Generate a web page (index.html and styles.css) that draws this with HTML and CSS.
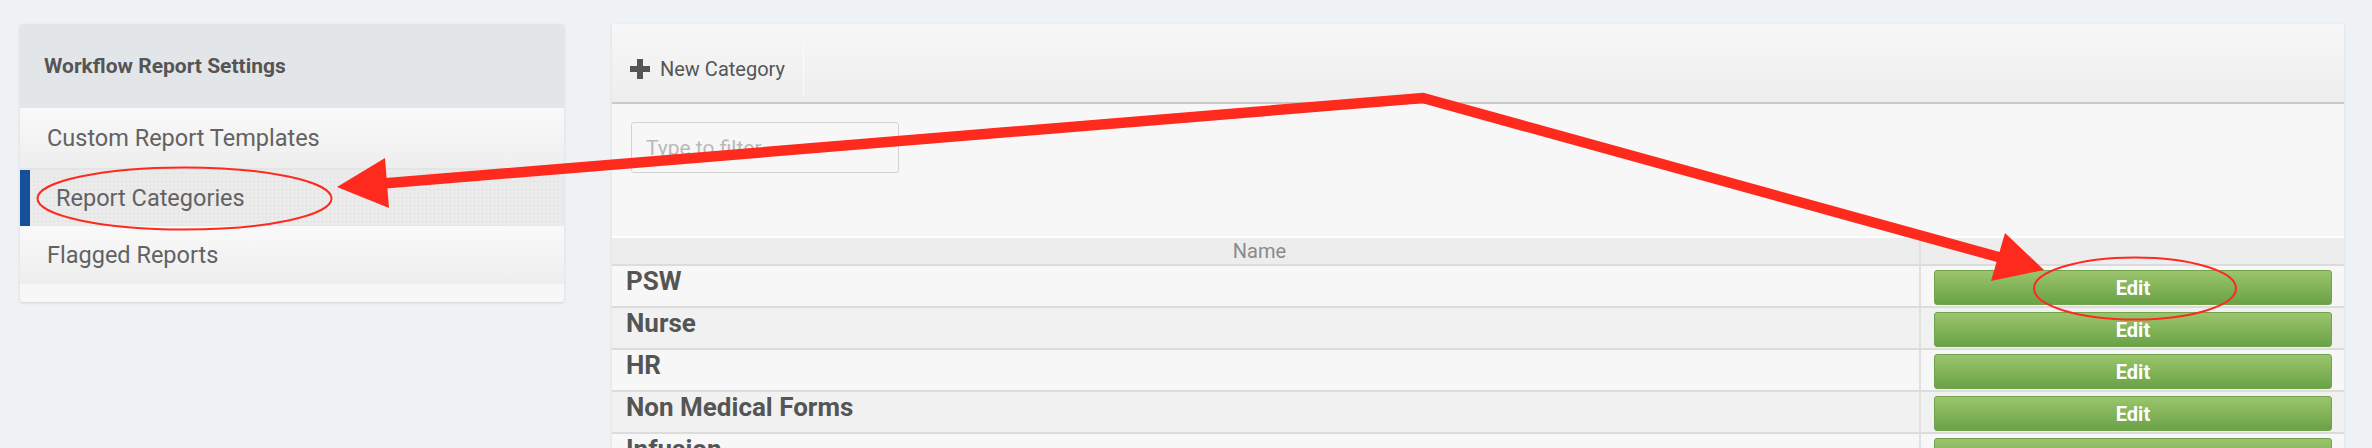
FILE: index.html
```html
<!DOCTYPE html>
<html lang="en">
<head>
<meta charset="utf-8">
<title>Report Categories</title>
<link rel="stylesheet" href="styles.css">
</head>
<body>
<div class="page">
  <aside class="settings-card">
    <div class="card-header">Workflow Report Settings</div>
    <nav class="menu">
      <a class="menu-item first">Custom Report Templates</a>
      <a class="menu-item active">Report Categories</a>
      <a class="menu-item">Flagged Reports</a>
    </nav>
  </aside>
  <main class="panel">
    <div class="toolbar">
      <button class="tool-btn" type="button">
        <svg class="plus" width="20" height="20" viewBox="0 0 20 20"><rect x="7" y="0" width="6" height="20" fill="#555"/><rect x="0" y="7" width="20" height="6" fill="#555"/></svg>
        <span>New Category</span>
      </button>
    </div>
    <div class="filter-area">
      <input class="filter" type="text" placeholder="Type to filter">
    </div>
    <div class="table">
      <div class="thead">
        <div class="th name-col">Name</div>
        <div class="th"></div>
      </div>
      <div class="row"><div class="cell name">PSW</div><div class="cell action"><button class="edit" type="button">Edit</button></div></div>
      <div class="row alt"><div class="cell name">Nurse</div><div class="cell action"><button class="edit" type="button">Edit</button></div></div>
      <div class="row"><div class="cell name">HR</div><div class="cell action"><button class="edit" type="button">Edit</button></div></div>
      <div class="row alt"><div class="cell name">Non Medical Forms</div><div class="cell action"><button class="edit" type="button">Edit</button></div></div>
      <div class="row"><div class="cell name">Infusion</div><div class="cell action"><button class="edit" type="button">Edit</button></div></div>
    </div>
  </main>
</div>
<svg class="annotations" width="2372" height="448" viewBox="0 0 2372 448">
  <path d="M383,183.5 L1423,98 L2002,258" fill="none" stroke="#fe2a1e" stroke-width="10.5" stroke-linejoin="miter"/>
  <polygon points="337,187 385,158 389,208" fill="#fe2a1e"/>
  <polygon points="2044,270 2005,233 1991,281" fill="#fe2a1e"/>
  <ellipse cx="184.5" cy="198.5" rx="147" ry="31" fill="none" stroke="#fe2a1e" stroke-width="2"/>
  <ellipse cx="2135" cy="288.5" rx="101" ry="31" fill="none" stroke="#fe2a1e" stroke-width="2"/>
</svg>
</body>
</html>
```
FILE: styles.css
```css
html, body {
  margin: 0;
  height: 100%;
}
body {
  background: #eef2f5;
  font-family: Roboto, "Liberation Sans", sans-serif;
  overflow: hidden;
  position: relative;
}
.page {
  display: flex;
  align-items: flex-start;
  gap: 48px;
  padding: 24px 28px 0 20px;
}

/* left settings card */
.settings-card {
  width: 544px;
  flex: none;
  background: #f7f7f7;
  box-shadow: 0 1px 3px rgba(0, 0, 0, 0.13);
  border-radius: 2px;
  padding-bottom: 18px;
}
.card-header {
  height: 84px;
  display: flex;
  align-items: center;
  padding-left: 24px;
  background: #e3e6e9;
  border-radius: 2px 2px 0 0;
  font-weight: 700;
  font-size: 21px;
  color: #555;
}
.menu {
  display: flex;
  flex-direction: column;
}
.menu-item {
  display: flex;
  align-items: center;
  height: 58px;
  padding-left: 27px;
  font-size: 23.5px;
  color: #626262;
  background: linear-gradient(#f9f9f9, #eeeeee);
  text-decoration: none;
}
.menu-item.first {
  height: 60px;
  border-bottom: 2px solid #e4e4e4;
}
.menu-item.active {
  height: 56px;
  border-left: 10px solid #16509a;
  padding-left: 26px;
  background-color: #ececec;
  background-image:
    repeating-linear-gradient(0deg, rgba(0, 0, 0, 0.018) 0 1px, transparent 1px 4px),
    repeating-linear-gradient(90deg, rgba(0, 0, 0, 0.018) 0 1px, transparent 1px 4px);
}

/* right panel */
.panel {
  flex: 1;
  background: #f7f7f7;
  box-shadow: 0 1px 3px rgba(0, 0, 0, 0.1);
  min-height: 470px;
}
.toolbar {
  height: 80px;
  box-sizing: border-box;
  padding-top: 18px;
  background: linear-gradient(#f7f7f7, #eeeeee);
  border-bottom: 2px solid #c9c9c9;
  display: flex;
  align-items: flex-start;
}
.tool-btn {
  height: 54px;
  display: flex;
  align-items: center;
  gap: 10px;
  padding: 0 18px;
  border: 0;
  border-right: 1px solid #fbfbfb;
  background: transparent;
  font-family: Roboto, "Liberation Sans", sans-serif;
  font-size: 20px;
  color: #555;
}
.plus {
  display: block;
  flex: none;
}
.filter-area {
  height: 134px;
  box-sizing: border-box;
  padding: 18px 0 0 19px;
  border-bottom: 2px solid #ffffff;
}
.filter {
  display: block;
  width: 268px;
  height: 51px;
  box-sizing: border-box;
  border: 1px solid #d3d3d3;
  border-radius: 3px;
  background: #f7f7f7;
  padding: 0 14px;
  font-family: Roboto, "Liberation Sans", sans-serif;
  font-size: 21px;
  color: #555;
}
.filter::placeholder {
  color: #b9b9b9;
}

/* table */
.thead,
.row {
  display: grid;
  grid-template-columns: 1fr 423px;
}
.thead {
  height: 28px;
  box-sizing: border-box;
  background: #ededed;
  border-bottom: 2px solid #dcdcdc;
}
.th {
  font-size: 20px;
  color: #8a8a8a;
  text-align: center;
  line-height: 24px;
  padding-top: 1px;
}
.name-col {
  border-right: 2px solid #e0e0e0;
  padding-right: 12px;
}
.row {
  height: 42px;
  box-sizing: border-box;
  background: #f7f7f7;
  border-bottom: 2px solid #dcdcdc;
}
.row.alt {
  background: #f1f1f1;
}
.cell.name {
  font-weight: 700;
  font-size: 26px;
  color: #555;
  padding-left: 14px;
  line-height: 30px;
  border-right: 2px solid #e0e0e0;
}
.cell.action {
  padding: 4px 12px 0 13px;
}
.edit {
  display: block;
  width: 100%;
  height: 35px;
  border: 1px solid #70a34c;
  border-radius: 3px;
  background: linear-gradient(#9bc56c, #6aa246);
  color: #fff;
  font-family: Roboto, "Liberation Sans", sans-serif;
  font-weight: 700;
  font-size: 20px;
  padding: 0;
}

/* screenshot annotations overlaid on the page */
.annotations {
  position: absolute;
  top: 0;
  left: 0;
  pointer-events: none;
}
```
